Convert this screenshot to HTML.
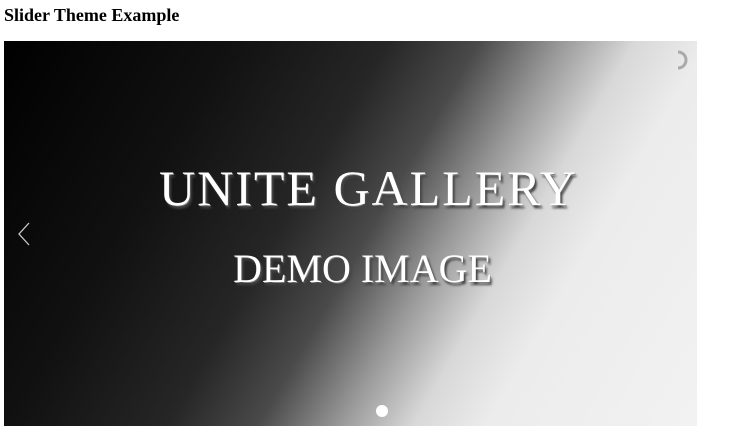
<!DOCTYPE html>
<html><head><style>
html,body{margin:0;padding:0;background:#fff;width:750px;height:446px;overflow:hidden}
h1{position:absolute;left:4px;top:5px;margin:0;font:bold 18px "Liberation Serif",serif;color:#000}
.s{position:absolute;left:4px;top:41px;width:693px;height:385px;overflow:hidden;
background:linear-gradient(120deg,#000 0%,#111 25%,#262626 42%,#4a4a4a 52%,#999 61%,#d8d8d8 69%,#ececec 77%,#f2f2f2 100%)}
.t{position:absolute;width:100%;text-align:center;font-family:"Liberation Serif",serif;color:#fff;text-shadow:2px 3px 2px #444,1px 1px 0 #999}
.t1{top:118px;font-size:50px;left:18px;letter-spacing:2px}
.t2{top:204px;font-size:40px;left:12px;letter-spacing:0px}
.dot{position:absolute;left:372px;top:364px;width:12px;height:12px;border-radius:50%;background:#fff}
</style></head><body>
<h1>Slider Theme Example</h1>
<div class="s">
<div class="t t1">UNITE GALLERY</div>
<div class="t t2">DEMO IMAGE</div>
<svg style="position:absolute;left:12px;top:180px" width="16" height="26"><path d="M13 2 L3 13 L13 24" stroke="#ccc" stroke-width="1.3" fill="none"/></svg>
<svg style="position:absolute;left:668px;top:8px" width="20" height="22"><path d="M6 3 A8 8 0 0 1 6 19" stroke="#aaa" stroke-width="3" fill="none"/></svg>
<div class="dot"></div>
</div>
</body></html>
